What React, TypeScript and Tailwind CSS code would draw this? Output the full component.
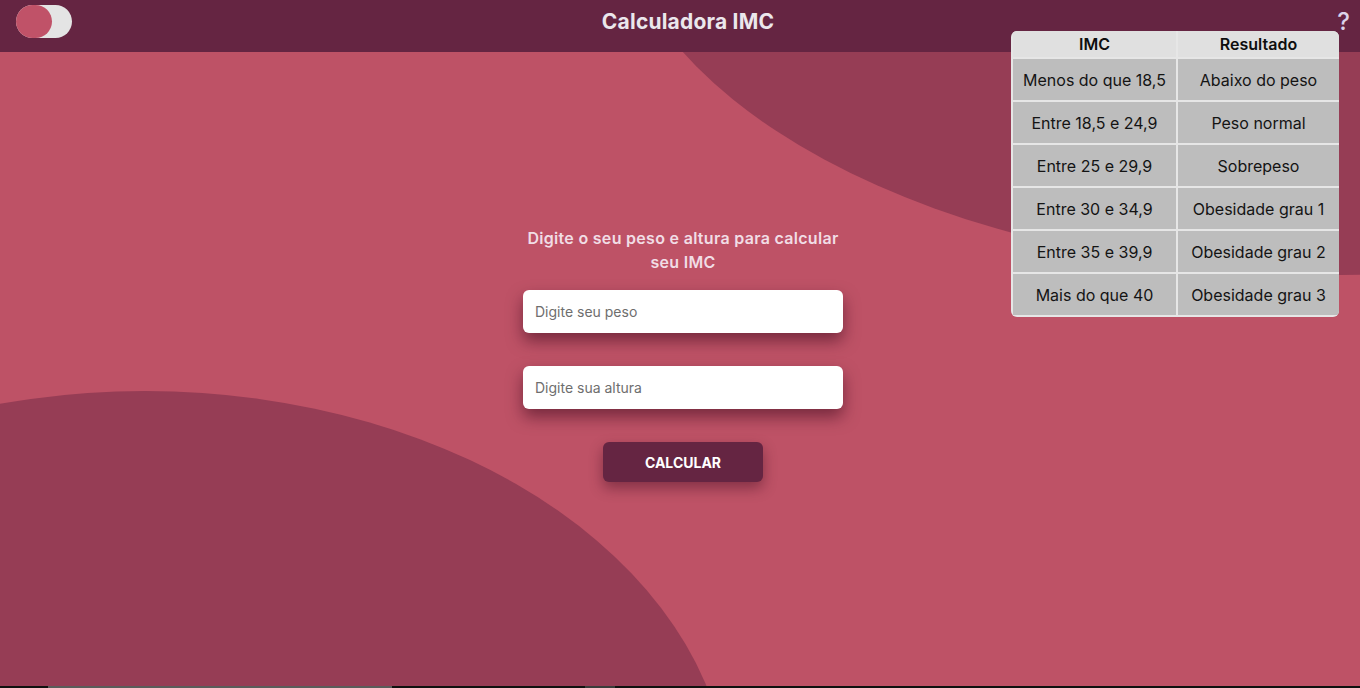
import React from "react";

const ROWS: [string, string][] = [
  ["Menos do que 18,5", "Abaixo do peso"],
  ["Entre 18,5 e 24,9", "Peso normal"],
  ["Entre 25 e 29,9", "Sobrepeso"],
  ["Entre 30 e 34,9", "Obesidade grau 1"],
  ["Entre 35 e 39,9", "Obesidade grau 2"],
  ["Mais do que 40", "Obesidade grau 3"],
];

export default function App() {
  return (
    <div
      className="relative h-[688px] w-[1360px] overflow-hidden flex flex-col bg-[#be5266]"
      style={{ fontFamily: "Inter, 'Noto Sans', sans-serif" }}
    >
      {/* background blobs */}
      <div className="absolute left-[610px] top-[-515px] w-[1460px] h-[790px] rounded-[50%] bg-[#963d55]" />
      <div className="absolute left-[-440px] top-[391px] w-[1170px] h-[820px] rounded-[50%] bg-[#963d55]" />

      {/* header */}
      <header className="relative z-10 h-[52px] bg-[#652542] grid grid-cols-[1fr_auto_1fr] items-start px-4">
        <button className="mt-[5px] w-[56px] h-[33px] rounded-full bg-[#e4e4e4] flex items-center">
          <span className="w-[36px] h-[33px] rounded-full bg-[#c05268]" />
        </button>
        <h1 className="mt-[8px] ml-[16px] text-[21px] leading-[28px] font-bold text-[#ebe7ec] tracking-[0.2px]">Calculadora IMC</h1>
        <span className="justify-self-end mt-[10px] -mr-[6px] text-[24px] leading-none font-medium text-[#dcd3ea]">?</span>
      </header>

      {/* form */}
      <main className="relative z-10 flex-1 flex flex-col items-center pt-[174px] pl-[6px]">
        <p className="w-[340px] text-center text-[16px] leading-[24px] font-semibold tracking-[0.3px] text-[#f1dde5]">
          Digite o seu peso e altura para calcular seu IMC
        </p>
        <input
          placeholder="Digite seu peso"
          className="mt-[16px] w-[320px] h-[43px] rounded-[6px] bg-white px-3 text-[14px] text-gray-800 placeholder:text-[#6e6e6e] outline-none shadow-[0_8px_16px_rgba(60,10,30,0.55)]"
        />
        <input
          placeholder="Digite sua altura"
          className="mt-[33px] w-[320px] h-[43px] rounded-[6px] bg-white px-3 text-[14px] text-gray-800 placeholder:text-[#6e6e6e] outline-none shadow-[0_8px_16px_rgba(60,10,30,0.55)]"
        />
        <button className="mt-[33px] w-[160px] h-[40px] rounded-[6px] bg-[#652542] text-white text-[14px] font-bold shadow-[0_6px_14px_rgba(60,10,30,0.45)]">
          CALCULAR
        </button>
      </main>

      {/* bottom strip */}
      <div className="relative z-10 h-[2px] bg-[#0f110f] flex">
        <div className="ml-[48px] w-[344px] bg-[#5a5c5a]" />
        <div className="ml-[193px] w-[30px] bg-[#3a3c3a]" />
      </div>

      {/* table */}
      <div className="absolute z-20 left-[1011px] top-[31px] w-[328px] rounded-[6px] overflow-hidden bg-[#e6e6e6] p-[2px] pt-0">
        <div className="grid grid-cols-[163px_161px] gap-x-[2px] gap-y-[2px] text-[16px] text-[#141414]">
          <div className="h-[26px] bg-[#e0e0e0] flex items-center justify-center font-semibold text-[#0e0e0e]">IMC</div>
          <div className="h-[26px] bg-[#e0e0e0] flex items-center justify-center font-semibold text-[#0e0e0e]">Resultado</div>
          {ROWS.map(([a, b]) => (
            <React.Fragment key={a}>
              <div className="h-[41px] bg-[#bdbdbd] flex items-center justify-center">{a}</div>
              <div className="h-[41px] bg-[#bdbdbd] flex items-center justify-center">{b}</div>
            </React.Fragment>
          ))}
        </div>
      </div>
    </div>
  );
}
